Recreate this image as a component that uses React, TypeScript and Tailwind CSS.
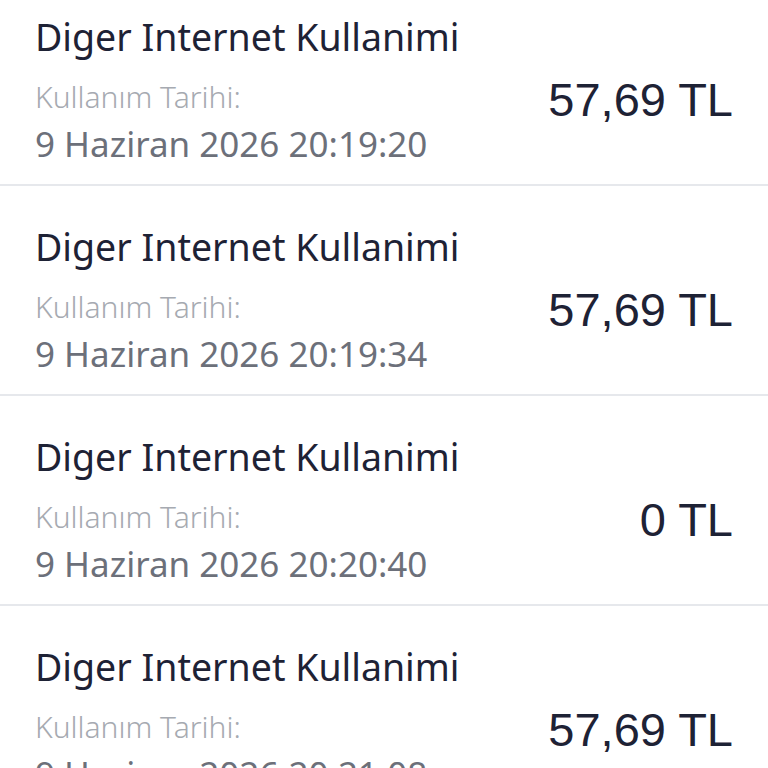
const rows = [
  { date: "9 Haziran 2026 20:19:20", amount: "57,69 TL" },
  { date: "9 Haziran 2026 20:19:34", amount: "57,69 TL" },
  { date: "9 Haziran 2026 20:20:40", amount: "0 TL" },
  { date: "9 Haziran 2026 20:21:08", amount: "57,69 TL" },
]

function UsageRow({ date, amount }: { date: string; amount: string }) {
  return (
    <div className="flex h-[210px] items-start justify-between border-b-2 border-[#e6e8ec] px-[35px] pt-[37px]">
      <div className="flex flex-col font-['Noto_Sans',sans-serif]">
        <span className="text-[37.5px] leading-[48px] text-[#1e2235]">Diger Internet Kullanimi</span>
        <span className="mt-[16px] text-[30px] font-light leading-[40px] text-[#a6aab1]">Kullanım Tarihi:</span>
        <span className="mt-[5px] text-[35px] leading-[44px] text-[#6c707a]">{date}</span>
      </div>
      <span className="mt-[64px] font-['Liberation_Sans',Arial,sans-serif] text-[47px] leading-[46px] text-[#1e2235]">
        {amount}
      </span>
    </div>
  )
}

export default function App() {
  return (
    <div className="h-[768px] w-[768px] overflow-hidden bg-white">
      <div className="-mt-[24px]">
        {rows.map((r, i) => (
          <UsageRow key={i} date={r.date} amount={r.amount} />
        ))}
      </div>
    </div>
  )
}
